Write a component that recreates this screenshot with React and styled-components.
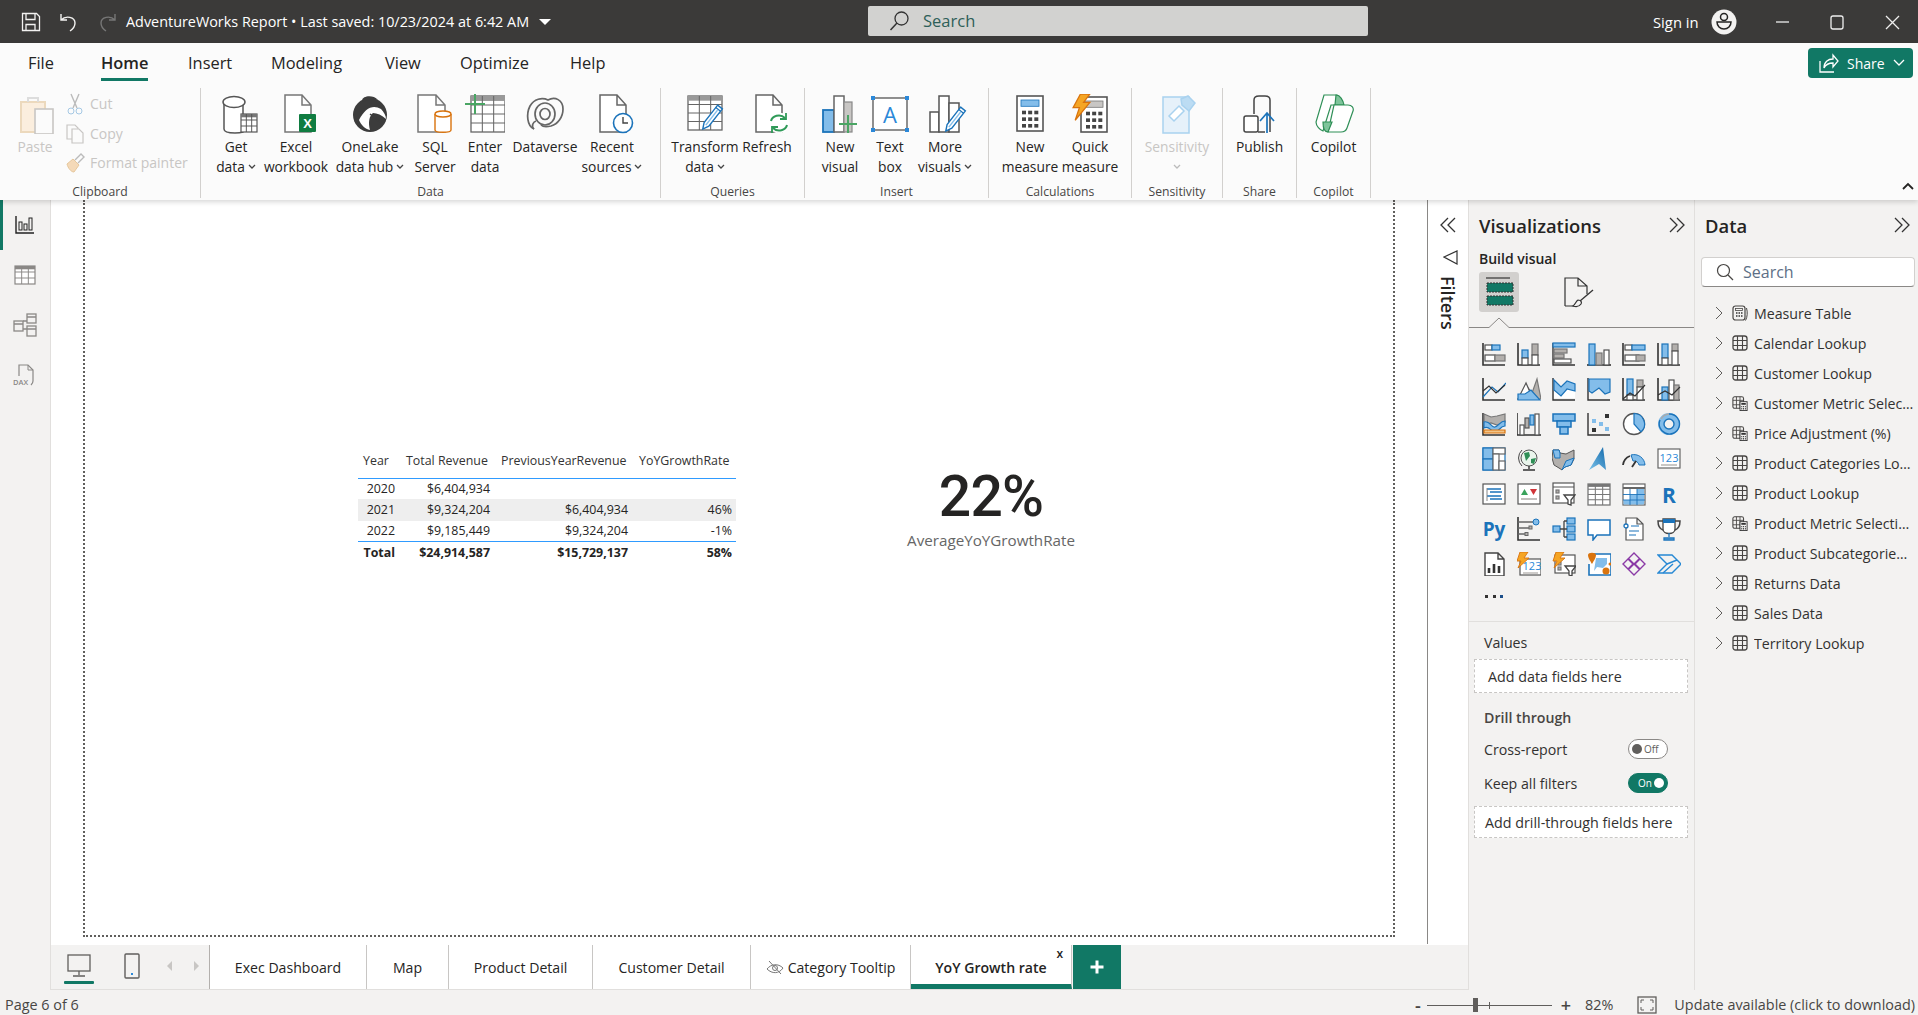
import React from 'react';
import styled, { createGlobalStyle } from 'styled-components';

const FONT = '"Open Sans", "Noto Sans", "Liberation Sans", sans-serif';
const D = '#505050', K = '#333', B = '#1b73ba', L = '#83bdea', G = '#b3b0ad', W = '#fff', GR = '#2f8f57', OR = '#d9730d', T = '#117865';

const Global = createGlobalStyle`
  html, body { margin: 0; padding: 0; width: 100%; height: 100%; overflow: hidden; background: #fff; }
  body { font-family: ${FONT}; color: #252423; }
  #root { width: 1918px; height: 1015px; }
`;

const Shell = styled.div`display:flex;flex-direction:column;width:1918px;height:1015px;overflow:hidden;`;
const TitleBar = styled.header`height:43px;background:#3b3a39;display:flex;align-items:center;position:relative;color:#fff;flex:none;`;
const QuickIcons = styled.div`display:flex;align-items:center;gap:18px;margin-left:21px;width:105px;flex:none;`;
const DocTitle = styled.div`font-size:14.4px;white-space:nowrap;display:flex;align-items:center;gap:8px;width:742px;flex:none;`;
const Caret = styled.span`width:0;height:0;border-left:6px solid transparent;border-right:6px solid transparent;border-top:6px solid #fff;margin-left:2px;`;
const SearchBox = styled.div`width:500px;height:30px;margin-top:-2px;background:#d2d2d0;border-radius:2px;display:flex;align-items:center;gap:14px;padding-left:21px;box-sizing:border-box;color:#2e5f58;font-size:16.5px;flex:none;`;
const Account = styled.div`margin-left:285px;display:flex;align-items:center;gap:12px;font-size:14.8px;width:90px;flex:none;white-space:nowrap;`;
const WinControls = styled.div`display:flex;align-items:center;margin-left:29px;gap:35px;`;

const Ribbon = styled.section`height:157px;background:#fbfbfb;flex:none;position:relative;z-index:5;box-shadow:0 2px 5px rgba(0,0,0,.16);`;
const TabRow = styled.nav`height:45px;display:flex;align-items:flex-start;position:relative;`;
const RibbonTab = styled.div`position:absolute;left:${p=>p.$x}px;top:8px;height:27px;line-height:24px;font-size:16.4px;white-space:nowrap;font-weight:${p=>p.$on?600:400};border-bottom:${p=>p.$on?`3px solid ${T}`:'3px solid transparent'};color:#252423;`;
const ShareButton = styled.button`margin-left:auto;margin-top:5px;margin-right:5px;width:105px;height:30px;background:${T};border:0;border-radius:4px;color:#fff;font:14px ${FONT};display:flex;align-items:center;padding:0 0 0 9px;gap:8px;`;
const RibbonBody = styled.div`display:flex;height:110px;`;
const Group = styled.div`width:${p=>p.$w}px;height:110px;box-sizing:border-box;border-right:1px solid #d2d0ce;display:flex;flex-direction:column;flex:none;`;
const GroupRow = styled.div`height:93px;flex:none;display:flex;padding-left:${p=>p.$pad||0}px;`;
const GroupLabel = styled.div`line-height:22px;height:22px;flex:none;text-align:center;font-size:12.2px;color:#484644;`;
const RButton = styled.div`width:${p=>p.$w?p.$w+'px':'100%'};flex:none;display:flex;flex-direction:column;align-items:center;padding-top:6px;box-sizing:border-box;color:${p=>p.$off?'#c8c6c4':'#252423'};`;
const RIcon = styled.div`height:40px;display:flex;justify-content:center;transform:translateX(${p=>p.$dx||0}px);`;
const RText = styled.div`font-size:13.8px;line-height:20px;height:20px;margin-top:3px;white-space:nowrap;text-align:center;& + & {margin-top:0;} display:flex;align-items:center;gap:3px;justify-content:center;`;
const SmallCol = styled.div`display:flex;flex-direction:column;margin-top:1px;`;
const SmallBtn = styled.div`height:29.5px;display:flex;align-items:center;gap:5px;font-size:14px;color:#c8c6c4;white-space:nowrap;`;
const Collapse = styled.div`position:absolute;right:4px;bottom:5px;`;

const Main = styled.div`flex:1;display:flex;min-height:0;`;
const Rail = styled.aside`width:50px;background:#f3f2f1;border-right:1px solid #e1dfdd;flex:none;display:flex;flex-direction:column;align-items:center;position:relative;`;
const RailBtn = styled.div`height:50px;width:100%;display:flex;align-items:center;justify-content:center;box-sizing:border-box;border-left:${p=>p.$on?`3px solid ${T}`:'3px solid transparent'};padding-right:3px;`;
const Center = styled.div`width:1417px;flex:none;display:flex;flex-direction:column;min-height:0;`;
const WorkArea = styled.div`flex:1;display:flex;min-height:0;`;
const Canvas = styled.main`width:1376px;box-sizing:border-box;padding:0 32px 8px 32px;background:#fff;flex:none;`;
const Page = styled.div`height:100%;box-sizing:border-box;border:2px dotted #605e5c;border-top:0;position:relative;`;
const FiltersPane = styled.aside`flex:1;border-left:1px solid #8a8886;background:#fff;display:flex;flex-direction:column;align-items:center;padding-top:15px;margin-bottom:1px;`;
const FunnelWrap = styled.div`margin-top:14px;margin-left:8px;height:20px;`;
const FiltersText = styled.div`writing-mode:vertical-rl;font-size:18px;font-weight:600;margin-top:7px;color:#252423;`;
const TabsBar = styled.nav`height:44px;flex:none;display:flex;background:#f3f2f1;border-bottom:1px solid #e1dfdd;`;
const ViewSwitch = styled.div`width:159px;flex:none;display:flex;align-items:flex-start;position:relative;border-right:1px solid #b3b0ad;box-sizing:border-box;`;
const ViewBtn = styled.div`width:${p=>p.$w}px;height:44px;display:flex;flex-direction:column;align-items:center;padding-top:8px;box-sizing:border-box;flex:none;position:relative;`;
const ActiveMark = styled.div`position:absolute;left:13px;bottom:5px;width:30px;height:3px;background:${T};border-radius:1px;`;
const PageTab = styled.div`width:${p=>p.$w}px;flex:none;box-sizing:border-box;background:#fff;border-right:1px solid #c8c6c4;display:flex;align-items:center;justify-content:center;gap:4px;font-size:14.1px;font-weight:${p=>p.$on?600:400};white-space:nowrap;position:relative;border-bottom:${p=>p.$on?`5px solid ${T}`:'0'};padding-top:${p=>p.$on?'5px':'0'};color:#252423;`;
const TabClose = styled.span`position:absolute;right:8px;top:2px;font-size:12px;font-weight:600;line-height:14px;`;
const AddTab = styled.div`width:48px;background:${T};flex:none;display:flex;align-items:center;justify-content:center;margin-left:1px;`;

const VizPane = styled.aside`width:225px;flex:none;background:#f3f2f1;border-left:1px solid #e1dfdd;`;
const DataPane = styled.aside`flex:1;background:#f3f2f1;border-left:1px solid #e1dfdd;min-width:0;`;
const PaneHead = styled.div`height:50px;display:flex;align-items:center;justify-content:space-between;padding:0 ${p=>p.$right}px 0 ${p=>p.$left}px;`;
const PaneTitle = styled.h2`margin:0;font-size:18.4px;font-weight:600;color:#252423;`;
const BuildLabel = styled.div`font-size:14px;font-weight:600;line-height:17px;padding-left:10px;`;
const ToggleRow = styled.div`display:flex;align-items:center;margin:5px 0 0 10px;height:40px;gap:43px;`;
const Selected = styled.div`width:40px;height:40px;background:#d2d0ce;border-radius:3px;display:flex;align-items:center;justify-content:center;`;
const NotchLine = styled.div`height:15px;position:relative;border-bottom:1px solid #8a8886;`;
const Notch = styled.span`position:absolute;left:20px;bottom:-1px;width:20px;height:10px;background:#f3f2f1;display:block;`;
const NotchStroke = styled.svg`position:absolute;left:0;top:1px;`;
const VizGrid = styled.div`display:grid;grid-template-columns:repeat(6,35px);grid-auto-rows:35px;margin:8px 0 0 7px;`;
const VizCell = styled.div`display:flex;align-items:center;justify-content:center;`;
const Divider = styled.div`height:1px;background:#e1dfdd;margin-top:5px;`;
const FieldLabel = styled.div`font-size:14.2px;height:37px;line-height:42px;padding-left:15px;color:#323130;`;
const Well = styled.div`margin:${p=>p.$mt||0}px 6px 0 5px;height:${p=>p.$h}px;background:#fff;border:1px dashed #c8c6c4;box-sizing:border-box;display:flex;align-items:center;padding-left:${p=>p.$pad}px;font-size:14.3px;color:#323130;white-space:nowrap;`;
const DrillTitle = styled.div`font-size:14.2px;font-weight:600;line-height:20px;margin-top:15px;padding-left:15px;color:#484644;`;
const SwitchRow = styled.div`display:flex;align-items:center;justify-content:space-between;height:20px;margin-top:${p=>p.$mt}px;padding:0 26px 0 15px;font-size:14.2px;color:#323130;`;
const Toggle = styled.div`width:40px;height:20px;box-sizing:border-box;border-radius:10px;border:1px solid ${p=>p.$on?T:'#8a8886'};background:${p=>p.$on?T:'#fff'};display:flex;align-items:center;justify-content:${p=>p.$on?'flex-end':'flex-start'};padding:0 3px;gap:2px;font-size:10px;color:${p=>p.$on?'#fff':'#605e5c'};`;
const Knob = styled.span`width:10px;height:10px;border-radius:50%;background:${p=>p.$on?'#fff':'#605e5c'};flex:none;`;
const Search2 = styled.div`margin:7px 3px 0 6px;height:30px;background:#fff;border:1px solid #d2d0ce;border-bottom-color:#8a8886;border-radius:4px;box-sizing:border-box;display:flex;align-items:center;padding-left:14px;gap:9px;font-size:16px;color:#5d6f86;`;
const FieldList = styled.ul`list-style:none;margin:11px 0 0;padding:0;`;
const FieldRow = styled.li`height:30px;display:flex;align-items:center;padding-left:20px;gap:9px;font-size:14.2px;color:#323130;`;
const FieldIcon = styled.span`width:16px;flex:none;display:flex;overflow:visible;margin-right:-3px;`;
const FieldName = styled.span`white-space:nowrap;overflow:hidden;text-overflow:ellipsis;width:160px;`;

const TableVisual = styled.table`position:absolute;left:273px;top:248px;width:378px;table-layout:fixed;border-collapse:collapse;font-size:12.4px;color:#252423;`;
const Th = styled.th`font-weight:400;text-align:left;height:24px;padding:0 0 6px ${p=>p.$pad}px;border-bottom:1px solid #2f9bff;white-space:nowrap;overflow:visible;color:#333;`;
const Td = styled.td`text-align:right;padding:0 4px 0 0;height:${p=>p.$h||20}px;box-sizing:border-box;white-space:nowrap;font-weight:${p=>p.$b?700:400};background:${p=>p.$alt?'#eeeeee':'transparent'};border-top:${p=>p.$top?'1px solid #2f9bff':'0'};`;
const CardVisual = styled.div`position:absolute;left:796px;top:265px;width:220px;text-align:center;`;
const CardValue = styled.div`font-family:Roboto, "Liberation Sans", sans-serif;font-weight:500;font-size:57px;line-height:64px;color:#252423;letter-spacing:-.8px;`;
const CardLabel = styled.div`font-size:15.2px;line-height:20px;color:#666;margin-top:1px;`;

const StatusBar = styled.footer`height:25px;box-sizing:border-box;flex:none;background:#f3f2f1;display:flex;align-items:center;font-size:14.2px;color:#484644;padding:5px 0 0 5px;position:relative;`;
const Zoomer = styled.div`margin-left:auto;display:flex;align-items:center;`;
const Slider = styled.div`width:125px;height:1px;background:#605e5c;margin:0 9px 0 6px;position:relative;`;
const Thumb = styled.span`position:absolute;left:46px;top:-7px;width:5px;height:14px;background:#605e5c;`;
const Tick = styled.span`position:absolute;left:62px;top:-3px;width:1px;height:7px;background:#605e5c;`;
const StatusText = styled.span`white-space:nowrap;margin-left:${p=>p.$ml||0}px;margin-right:${p=>p.$mr||0}px;font-size:${p=>p.$fs||14.4}px;font-weight:${p=>p.$b?600:400};line-height:18px;`;

/* drawing helpers */
const Svg = ({ s = 24, w, h, vb, children, sw }) => (
  <svg width={w || s} height={h || s} viewBox={vb || `0 0 ${w || s} ${h || s}`} fill="none" strokeWidth={sw}>{children}</svg>
);
const R = ({ x, y, w, h, f = W, s = D, sw = 1.2, r }) => <rect x={x} y={y} width={w} height={h} fill={f} stroke={s} strokeWidth={sw} rx={r} />;
const P = ({ d, f = 'none', s = D, sw = 1.2, ...o }) => <path d={d} fill={f} stroke={s} strokeWidth={sw} {...o} />;
const Axis = () => <P d="M1 1V23H23" s={K} sw={1.6} />;
const ChevD = ({ c = '#444' }) => <svg width="8" height="6" viewBox="0 0 8 6"><path d="M1 1l3 3 3-3" fill="none" stroke={c} strokeWidth="1.3" /></svg>;
const Dbl = ({ left }) => (
  <Svg s={20}>{left
    ? <P d="M10 3L3 10l7 7M17 3l-7 7 7 7" s="#333" sw={1.3} />
    : <P d="M3 3l7 7-7 7M10 3l7 7-7 7" s="#333" sw={1.3} />}</Svg>
);
const DocShape = ({ x = 8, y = 1, w = 24, h = 37, c = '#666', sw = 1.5 }) => (
  <P d={`M${x} ${y}h${w - 9}l9 10v${h - 10}h-${w}zM${x + w - 9} ${y}v10h9`} f={W} s={c} sw={sw} />
);
const GridTable = ({ x, y, w, h, c = '#666', cols = 3, rows = 3, head, sw = 1.3 }) => {
  const v = [], hz = [];
  for (let i = 1; i < cols; i++) v.push(x + (w * i) / cols);
  for (let i = 1; i < rows; i++) hz.push(y + (h * i) / rows);
  return (
    <g>
      <rect x={x} y={y} width={w} height={h} fill={W} stroke={c} strokeWidth={sw} />
      {head && <rect x={x} y={y} width={w} height={h / rows * 0.55} fill={head} />}
      {v.map(a => <line key={a} x1={a} x2={a} y1={y} y2={y + h} stroke={c} strokeWidth={sw * .8} />)}
      {hz.map(a => <line key={a} x1={x} x2={x + w} y1={a} y2={a} stroke={c} strokeWidth={sw * .8} />)}
    </g>
  );
};
const Pencil = ({ x, y, rot = 40, len = 24 }) => (
  <g transform={`translate(${x} ${y}) rotate(${rot})`}>
    <path d={`M-3 0h6v${len - 6}l-3 6-3-6z`} fill={W} stroke={B} strokeWidth="1.4" />
    <path d="M-3 3h6" stroke={B} strokeWidth="1.2" />
    <path d={`M0 4v${len - 9}`} stroke={L} strokeWidth="1.5" />
  </g>
);
const Calc = ({ x, y, w = 28, h = 36, top = L }) => {
  const dots = [];
  for (let r = 0; r < 3; r++) for (let c = 0; c < 3; c++) dots.push([x + 5 + c * (w - 10) / 2.6, y + h * .42 + r * h * .19]);
  return (
    <g>
      <rect x={x} y={y} width={w} height={h} fill={W} stroke="#555" strokeWidth="1.6" />
      <rect x={x + 4} y={y + 4} width={w - 8} height={h * .18} fill={top} stroke={top === L ? B : '#777'} strokeWidth=".8" />
      {dots.map(([a, b]) => <rect key={a + '-' + b} x={a} y={b} width="4" height="3.6" fill="#444" />)}
    </g>
  );
};
const Bolt = ({ tf }) => <path transform={tf} d="M9 0h9L12 8h6L4 25l4-12H2z" fill="#f5a524" stroke={OR} strokeWidth="1.2" />;

const RI = {
  getdata: <Svg s={40}><P d="M5 8v27c0 3 6 4 11 4 3 0 5 0 8-1V8" f={W} s="#555" sw={1.5} /><ellipse cx="15" cy="8" rx="11" ry="5.5" fill={W} stroke="#555" strokeWidth="1.5" /><GridTable x={22} y={20} w={16} h={18} c="#555" cols={3} rows={3} head="#777" sw={1.2} /></Svg>,
  excel: <Svg s={40}><DocShape x={5} y={1} w={26} h={37} c="#777" /><rect x="19" y="20" width="17" height="18" rx="1" fill="#107c41" /><text x="27.5" y="34" fontSize="13" fontWeight="700" fill="#fff" textAnchor="middle" fontFamily="Liberation Sans">X</text></Svg>,
  onelake: <Svg s={40}><circle cx="20" cy="21" r="17" fill="#3c3c3c" /><path d="M9 26c6-12 14-16 22-11 3 3 5 7 5 10-4-4-9-6-13-6-4 3-5 10-3 17-5-1-9-5-11-10z" fill="#fff" /><path d="M13 8C9 3 22-1 28 6c-5-1-10 0-15 2z" fill="#3c3c3c" /><path d="M20 20c3 2 8 7 12 9" stroke="#3c3c3c" strokeWidth="1.5" /></Svg>,
  sql: <Svg s={40}><DocShape x={3} y={1} w={27} h={37} c="#777" /><path d="M20 20v16c0 3 16 3 16 0V20" fill={W} stroke={OR} strokeWidth="1.4" /><ellipse cx="28" cy="20" rx="8" ry="3" fill={W} stroke={OR} strokeWidth="1.4" /></Svg>,
  enter: <Svg s={40}><GridTable x={6} y={2} w={34} h={36} c="#666" cols={3} rows={4} head="#999" /><P d="M10 0v20M0 10h20" s="#4aa564" sw={2} /></Svg>,
  dataverse: <Svg s={40}><g fill="none" stroke="#666" strokeWidth="1.7"><path d="M9 35C2 32 1 20 5 12 9 5 17 3 23 6c7-4 15 0 15 9 0 8-5 15-12 17-4 1-8 1-10-1" /><ellipse cx="20" cy="20" rx="10" ry="11" /><ellipse cx="20" cy="20" rx="5" ry="5.5" /><path d="M9 35c-3-3-1-7 2-8" /></g></Svg>,
  recent: <Svg s={40}><DocShape x={3} y={1} w={26} h={37} c="#666" /><circle cx="26" cy="29" r="9.5" fill={W} stroke={B} strokeWidth="1.6" /><path d="M26 23v6h5" stroke="#444" strokeWidth="1.4" /></Svg>,
  transform: <Svg s={40}><GridTable x={2} y={2} w={34} h={34} c="#666" cols={3} rows={4} head="#999" /><Pencil x={34} y={13} rot={38} len={28} /></Svg>,
  refresh: <Svg s={40}><DocShape x={4} y={1} w={26} h={37} c="#666" /><circle cx="27" cy="29" r="10" fill={W} stroke={W} /><path d="M19 27c1-5 9-8 14-3M35 31c-1 5-9 8-14 3" stroke="#2f9a58" strokeWidth="2" /><path d="M34 19v6h-6M20 39v-6h6" stroke="#2f9a58" strokeWidth="1.8" /></Svg>,
  newvis: <Svg s={40}><R x={3} y={16} w={11} h={22} f={L} s={B} sw={1.8} /><R x={14} y={2} w={10} h={36} s="#666" sw={1.5} /><R x={24} y={8} w={8} h={30} f="#c8c6c4" s="#888" /><P d="M28 21v18M19 30h18" s="#4aa564" sw={2} /></Svg>,
  textbox: <Svg s={40}><rect x="3" y="4" width="34" height="32" fill={W} stroke="#555" strokeWidth="1.3" />{[[3, 4], [37, 4], [3, 36], [37, 36]].map(([a, b]) => <rect key={a + '' + b} x={a - 2} y={b - 2} width="4" height="4" fill="#2b88d8" />)}<text x="20" y="29" fontSize="22" fill="#2b88d8" textAnchor="middle" fontFamily="Open Sans">A</text></Svg>,
  more: <Svg s={40}><R x={2} y={18} w={9} h={20} s="#555" sw={1.5} /><R x={11} y={2} w={10} h={36} s="#555" sw={1.5} /><R x={21} y={9} w={10} h={29} s="#555" sw={1.5} /><Pencil x={35} y={15} rot={38} len={28} /></Svg>,
  newm: <Svg s={40}><Calc x={7} y={2} w={26} h={35} /></Svg>,
  quick: <Svg s={40}><Calc x={11} y={3} w={26} h={35} top="#c8c6c4" /><Bolt tf="translate(1 0) scale(1.05)" /></Svg>,
  sens: <Svg s={40}><g stroke="#a9d2ef" strokeWidth="1.5"><path d="M6 3h26v36H6z" fill="#e6f1fa" /><path d="M12 22l10-10 5 5-10 10z" fill="#fff" /><path d="M24 5l7-3 7 7-6 8-7-6z" fill="#bcdcf3" /></g></Svg>,
  publish: <Svg s={40}><P d="M14 20V6c0-3 2-4 5-4h6c3 0 5 1 5 4v32" s="#444" sw={1.5} /><rect x="4" y="22" width="14" height="16" rx="2" fill={W} stroke="#444" strokeWidth="1.5" /><path d="M18 38h7" stroke="#444" strokeWidth="1.5" /><P d="M27 39V20M20 27l7-8 7 8" s={B} sw={1.7} /></Svg>,
  copilot: <Svg s={40}><g stroke={GR} strokeWidth="1.2"><path d="M10 1h13c3 1 5 5 6 10H17l-8 26c-3-1-7-5-7-9z" fill={W} /><path d="M22 1c4 0 7 5 8 10h-9z" fill="#7fc49b" /><path d="M20 11h14c4 0 6 3 5 6l-6 17c-1 3-3 4-6 4H14l6-27z" fill={W} /><path d="M9 28h9l-4 10c-3 0-5-4-5-10z" fill="#7fc49b" /></g></Svg>,
};

const VIZ = [
  <g><Axis /><R x={3} y={3} w={7} h={5} /><R x={10} y={3} w={8} h={5} f={L} s={B} /><R x={3} y={13} w={10} h={6} /><R x={13} y={13} w={10} h={6} f={G} s="#777" /></g>,
  <g><Axis /><R x={5} y={8} w={6} h={8} f={L} s={B} /><R x={5} y={16} w={6} h={7} /><R x={15} y={2} w={6} h={11} f={G} s="#777" /><R x={15} y={13} w={6} h={10} /></g>,
  <g><P d="M1 1V23H23" s={K} sw={1.4} /><R x={1} y={1} w={22} h={4} f={L} s={B} /><R x={2} y={7} w={13} h={4} f={G} s="#777" /><R x={2} y={12} w={10} h={4} f={G} s="#777" /><R x={2} y={17} w={17} h={4} /></g>,
  <g><P d="M0 23H24" s={K} sw={1.6} /><R x={2} y={2} w={6} h={21} f={L} s={B} /><R x={9} y={11} w={6} h={12} f={G} s="#777" /><R x={17} y={8} w={5} h={15} /></g>,
  <g><Axis /><R x={3} y={3} w={7} h={5} /><R x={10} y={3} w={13} h={5} f={L} s={B} /><R x={3} y={13} w={14} h={6} f={W} /><R x={14} y={13} w={9} h={6} f={G} s="#777" /></g>,
  <g><Axis /><R x={5} y={2} w={6} h={14} f={L} s={B} /><R x={5} y={16} w={6} h={7} /><R x={15} y={2} w={6} h={7} f={G} s="#777" /><R x={15} y={9} w={6} h={14} /></g>,

  <g><Axis /><P d="M1 20L10 10l6 5 8-9" s={B} /><P d="M1 14l6-5 7 7 9-8" s={K} /></g>,
  <g><P d="M1 22L9 8l6 8 5-14 4 20z" f={G} s="#777" /><P d="M1 22L9 6l7 16z" f={W} s="#555" /><P d="M1 23v-6l7 0 6-4 9 10z" f={L} s={B} /></g>,
  <g><P d="M1 1V23H23" s={K} sw={1.4} /><P d="M2 3l7 7 6-6 8 3v14H2z" f={W} s="none" /><P d="M2 3l7 7 6-6 8 3v7l-8-2-6 7-7-6z" f={L} s={B} /></g>,
  <g><P d="M1 1V23H23" s={K} sw={1.4} /><P d="M2 2h21v13l-5 2-6-6-7 5-3-2z" f={L} s={B} /></g>,
  <g><Axis /><R x={5} y={2} w={6} h={16} f={L} s={B} /><R x={5} y={18} w={6} h={5} /><R x={15} y={3} w={6} h={7} f={G} s="#777" /><R x={15} y={10} w={6} h={13} /><P d="M1 22l7-6 5 3 10-11" s={K} /></g>,
  <g><Axis /><R x={5} y={10} w={6} h={13} f={L} s={B} /><R x={12} y={3} w={5} h={20} /><R x={17} y={8} w={5} h={15} f={G} s="#777" /><P d="M1 18l7-4 7 4 8-8" s={K} /></g>,

  <g><Axis /><P d="M2 2l7 3 6-1 8-2v8l-8 3-6-2-7 2z" f={G} s="#777" /><P d="M2 10c6-2 7 6 11 5s5-6 10-6v5c-5 0-6 6-10 6s-6-7-11-4z" f={L} s={B} /><P d="M2 18h21v3H2z" f="#f1c58a" s={OR} /></g>,
  <g><P d="M0 1v22h24" s={K} sw={1.6} /><R x={3} y={13} w={4} h={10} s="#555" /><R x={8} y={6} w={4} h={10} f={G} s="#555" /><R x={13} y={3} w={4} h={10} f={L} s={B} /><R x={18} y={2} w={4} h={21} s="#555" /></g>,
  <g><R x={1} y={2} w={22} h={7} f={L} s={B} sw={1.5} /><R x={5} y={9} w={14} h={6} f={L} s={B} sw={1.5} /><R x={8} y={15} w={8} h={7} f={L} s={B} sw={1.5} /></g>,
  <g><P d="M1 1V23H23" s={K} sw={1.4} /><rect x="5" y="7" width="4" height="4" fill={L} /><rect x="12" y="10" width="4" height="4" fill={L} /><rect x="18" y="2" width="4" height="4" fill="#333" /><rect x="5" y="16" width="4" height="4" fill="#333" /><rect x="18" y="15" width="4" height="4" fill={L} /></g>,
  <g><circle cx="12" cy="12" r="10.5" fill={W} stroke="#555" strokeWidth="1.4" /><P d="M12 1.5a10.5 10.5 0 0 1 7 18.3L12 12z" f={L} s={B} /></g>,
  <g><circle cx="12" cy="12" r="8" stroke={L} strokeWidth="6" /><path d="M3 8A10 10 0 0 0 8 21a10 10 0 0 0 14-6 10 10 0 0 0-10-13" stroke={B} strokeWidth="1.4" /><path d="M4 7a10 10 0 0 1 8-5" stroke="#aaa" strokeWidth="1.4" /><circle cx="12" cy="12" r="5" fill="#f3f2f1" stroke={B} strokeWidth="1.4" /></g>,

  <g><R x={1} y={1} w={22} h={22} s={B} /><R x={1} y={1} w={10} h={11} f={L} s={B} /><R x={1} y={12} w={10} h={11} f={L} s={B} /><R x={11} y={1} w={12} h={6} s="#666" /><R x={11} y={7} w={6} h={16} s="#666" /><R x={17} y={14} w={6} h={9} s="#666" /></g>,
  <g><circle cx="12" cy="11" r="8" fill="#eaf5ec" stroke="#555" strokeWidth="1" /><path d="M7 6l5-1 1 4-4 5zM14 12l5-1-2 6-3-1z" fill={GR} /><path d="M5 3a11 11 0 0 0 0 16" stroke="#444" /><path d="M12 19v3M6 23h12" stroke="#333" strokeWidth="1.4" /></g>,
  <g><path d="M1 3l6 0 1 3 6 1 8-4 0 9-3 6-6 2-3 3-3-2-5-3-2-7z" fill={G} stroke="#555" /><path d="M1 3h6l1 3v5H3z" fill={L} stroke={B} /><path d="M14 14l8-3-3 7-6 2-3 3z" fill={L} stroke={B} /></g>,
  <g><path d="M16 0l3 23-7-6-10 6z" fill="url(#nav)" /><defs><linearGradient id="nav" x1="0" y1="1" x2="1" y2="0"><stop offset="0" stopColor="#7cc3ea" /><stop offset="1" stopColor="#1269ab" /></linearGradient></defs></g>,
  <g><path d="M1 18a11 11 0 0 1 7-9" stroke="#333" strokeWidth="1.8" /><path d="M9 8a11 11 0 0 1 14 10h-6a5 5 0 0 0-6-4z" fill={L} stroke={B} /><path d="M10 20l4-6" stroke="#333" strokeWidth="1.8" /></g>,
  <g><R x={1} y={2} w={22} h={19} s="#666" /><text x="12" y="15" fontSize="11" textAnchor="middle" fill="#2b88d8" fontFamily="Open Sans">123</text><path d="M4 18h16" stroke={G} strokeWidth="1.4" /></g>,

  <g><R x={1} y={2} w={22} h={20} s="#555" /><path d="M5 7h14M8 10h12M5 14h14M8 17h12" stroke={B} strokeWidth="1.4" /><path d="M5 6v13" stroke="#888" /></g>,
  <g><R x={1} y={2} w={22} h={20} s="#555" /><path d="M4 13l3.5-6 3.5 6z" fill="#3aa35c" /><path d="M13 7h7l-3.5 6z" fill="#d13438" /><path d="M4 17h16" stroke={G} strokeWidth="1.6" /></g>,
  <g><R x={1} y={1} w={21} h={20} s="#555" /><path d="M1 5h21" stroke="#555" /><R x={4} y={8} w={3} h={3} f={G} s="#777" /><R x={4} y={14} w={3} h={3} f={G} s="#777" /><P d="M12 13h11l-4 5v5l-3-1v-4z" f={W} s="#444" sw={1.3} /></g>,
  <g><GridTable x={1} y={2} w={22} h={21} c="#777" cols={3} rows={4} head="#777" /></g>,
  <g><R x={1} y={2} w={22} h={21} s="#666" /><path d="M1 6h22" stroke="#666" strokeWidth="2" /><rect x="8" y="13" width="7" height="5" fill={L} /><rect x="15" y="7" width="7" height="15" fill={L} /><rect x="1.5" y="18" width="20" height="4.5" fill={L} /><path d="M8 7v16M15 7v16M1 12.5h22M1 18h22" stroke={B} strokeWidth=".9" /></g>,
  <text x="12" y="21" fontSize="21" fontWeight="700" textAnchor="middle" fill={B} fontFamily="Open Sans">R</text>,

  <text x="12" y="19" fontSize="19" fontWeight="700" textAnchor="middle" fill={B} fontFamily="Open Sans">Py</text>,
  <g><path d="M1 0v23h22" stroke={K} strokeWidth="1.6" /><path d="M1 5h15M1 11h11M1 17h7" stroke="#666" strokeWidth="1.4" /><circle cx="19" cy="5" r="3" fill={L} stroke={B} /><rect x="12" y="9" width="3" height="3" fill={G} stroke="#666" /><rect x="8" y="15.5" width="3" height="3" fill={G} stroke="#666" /></g>,
  <g><R x={1} y={9} w={7} h={6} f={L} s={B} /><R x={15} y={1} w={8} h={6} f={L} s={B} /><R x={15} y={9} w={8} h={6} f={L} s={B} /><R x={15} y={17} w={8} h={6} f={L} s={B} /><path d="M8 12h7M12 4v16M12 4h3M12 20h3" stroke="#444" strokeWidth="1.3" /></g>,
  <g><path d="M1 3h22v15H10l-4 5v-5H1z" fill={W} stroke={B} strokeWidth="1.5" /></g>,
  <g><path d="M4 1h11l6 6v16H4zM15 1v6h6" fill={W} stroke="#555" strokeWidth="1.2" /><circle cx="4" cy="9" r="2" fill={W} stroke={B} strokeWidth="1.3" /><path d="M9 9h8M7 14h10M7 18h7" stroke={B} strokeWidth="1.2" /></g>,
  <g><path d="M6 2h12v10c0 6-12 6-12 0z" fill={W} stroke="#444" strokeWidth="1.3" /><rect x="6" y="2" width="12" height="4" fill={B} /><path d="M6 4H1c0 6 2 8 5 9M18 4h5c0 6-2 8-5 9" stroke="#444" strokeWidth="1.5" /><path d="M12 16v4M7 21h10v2H7z" fill={L} stroke={B} strokeWidth="1.3" /></g>,

  <g><path d="M3 1h13l6 6v17H3zM16 1v6h6" fill={W} stroke="#444" strokeWidth="1.4" /><path d="M7 21v-5M12 21v-9M17 21v-7" stroke="#333" strokeWidth="2.6" /></g>,
  <g><R x={3} y={7} w={21} h={16} f={W} s="#555" /><text x="15" y="18" fontSize="11" textAnchor="middle" fill="#2b88d8" fontFamily="Open Sans">123</text><path d="M6 21h15" stroke={G} strokeWidth="1.3" /><path d="M3 0h8L7 6h5L1 16l3-7H0z" fill="#f5a524" stroke={OR} strokeWidth=".9" /></g>,
  <g><R x={3} y={3} w={20} h={18} s="#555" /><R x={6} y={10} w={3} h={3} f={G} s="#777" /><R x={6} y={15} w={3} h={3} f={G} s="#777" /><P d="M13 14h11l-4 5v5l-3-1v-4z" f={W} s="#444" sw={1.3} /><path d="M4 0h8L8 6h5L2 16l3-7H1z" fill="#f5a524" stroke={OR} strokeWidth=".9" /></g>,
  <g><path d="M6 2h18v21H2V12" stroke={B} strokeWidth="1.6" fill={W} /><path d="M9 6h11v6l-4 4-6-1-3 4z" fill={L} /><path d="M1 3c0-3 8-3 8 0 0 3-3 7-4 9-1-2-4-6-4-9z" fill={OR} /><circle cx="19" cy="19" r="3.5" fill={OR} /><circle cx="23" cy="12" r="1.5" fill={OR} /></g>,
  <g fill="none" stroke="#8a3aa6" strokeWidth="1.4"><path d="M12 1l5.5 5.5L12 12 6.5 6.5zM12 12l5.5 5.5L12 23l-5.5-5.5zM6 7l5 5-5 5-5-5zM18 7l5 5-5 5-5-5z" /></g>,
  <g fill="none" stroke="#2688d4" strokeWidth="1.4"><path d="M1 3h14l9 9-9 9H1l9-9z" /><path d="M10 12l10-4M6 21l10-9" /></g>,
];

const TableIcon = () => <Svg s={16}><rect x="1" y="1" width="14" height="14" rx="2.5" stroke="#484644" strokeWidth="1.3" /><path d="M5.5 1v14M10.5 1v14M1 5.5h14M1 10.5h14" stroke="#484644" strokeWidth="1.1" /></Svg>;
const CalcTableIcon = () => <Svg s={18}><rect x="1" y="2" width="12" height="13" rx="2" stroke="#484644" strokeWidth="1.2" /><path d="M5 2v13M9 2v13M1 6h12M1 11h12" stroke="#484644" /><rect x="9" y="7.5" width="8" height="10" fill="#f3f2f1" stroke="#333" strokeWidth="1" /><rect x="10.5" y="9" width="5" height="2" fill="#333" /><path d="M10.5 13h5M10.5 15.5h5" stroke="#333" strokeDasharray="1 1" strokeWidth="1.5" /></Svg>;
const MeasureIcon = () => <Svg s={16}><rect x="1" y="1" width="12" height="14" rx="2.5" fill="#f3f2f1" stroke="#484644" strokeWidth="1.2" /><rect x="3.5" y="3.5" width="7" height="2" stroke="#484644" strokeWidth=".8" /><path d="M4 8h1.5M6.5 8H8M9 8h1.5M4 11h1.5M6.5 11H8M9 11h1.5" stroke="#333" strokeWidth="1.5" /><path d="M14.5 3c1.2 4 1 9-1 12.5" stroke="#484644" /></Svg>;

const fields = [
  ['m', 'Measure Table'], ['t', 'Calendar Lookup'], ['t', 'Customer Lookup'], ['c', 'Customer Metric Selection'],
  ['c', 'Price Adjustment (%)'], ['t', 'Product Categories Lookup'], ['t', 'Product Lookup'], ['c', 'Product Metric Selection'],
  ['t', 'Product Subcategories Lookup'], ['t', 'Returns Data'], ['t', 'Sales Data'], ['t', 'Territory Lookup'],
];

const RB = ({ w, icon, dx, l1, l2, off, chev, chev2 }) => (
  <RButton $w={w} $off={off}>
    <RIcon $dx={dx}>{icon}</RIcon>
    <RText>{l1}</RText>
    {(l2 || chev2) && <RText>{l2}{(chev || chev2) && <ChevD c={off ? '#bbb' : '#444'} />}</RText>}
  </RButton>
);

const tabs = [['File', 28], ['Home', 101, true], ['Insert', 188], ['Modeling', 271], ['View', 385], ['Optimize', 460], ['Help', 570]];

export default function App() {
  return (
    <Shell>
      <Global />
      <TitleBar>
        <QuickIcons>
          <Svg s={20}><path d="M1.5 1.5h14l3 3v14h-17zM5 1.5v6h9v-6M5 18.5v-6h9v6" stroke="#f3f2f1" strokeWidth="1.3" /></Svg>
          <Svg s={20}><path d="M2 2v6h6M2 8c5-5 14-3 14 3 0 3-2 6-5 8" stroke="#f3f2f1" strokeWidth="1.4" /></Svg>
          <Svg s={20}><path d="M18 2v6h-6M18 8C13 3 4 5 4 11c0 3 2 6 5 8" stroke="#777" strokeWidth="1.4" /></Svg>
        </QuickIcons>
        <DocTitle>AdventureWorks Report&nbsp;• Last saved: 10/23/2024 at 6:42 AM<Caret /></DocTitle>
        <SearchBox>
          <Svg s={20}><circle cx="12.5" cy="7.5" r="6.5" stroke="#333" strokeWidth="1.3" /><path d="M8 12L1.5 19" stroke="#333" strokeWidth="1.5" /></Svg>
          Search
        </SearchBox>
        <Account>Sign in
          <Svg s={26}><circle cx="13" cy="13" r="12.5" fill="#f3f2f1" /><circle cx="13" cy="8" r="3.5" stroke="#252423" strokeWidth="1.5" /><path d="M6 13h14c0 4-3 7-7 7s-7-3-7-7z" stroke="#252423" strokeWidth="1.5" /></Svg>
        </Account>
        <WinControls>
          <Svg s={20}><path d="M4 10h13" stroke="#eee" strokeWidth="1.3" /></Svg>
          <Svg s={20}><rect x="4" y="4" width="12" height="13" rx="2" stroke="#eee" strokeWidth="1.3" /></Svg>
          <Svg s={20}><path d="M4 4l13 13M17 4L4 17" stroke="#eee" strokeWidth="1.3" /></Svg>
        </WinControls>
      </TitleBar>

      <Ribbon>
        <TabRow>
          {tabs.map(([t, x, on]) => <RibbonTab key={t} $x={x} $on={on}>{t}</RibbonTab>)}
          <ShareButton>
            <Svg s={22}><path d="M3 9v11h14M7 16c0-6 4-9 9-9V3l5 6-5 6v-4c-4 0-7 1-9 5z" stroke="#fff" strokeWidth="1.3" /></Svg>
            Share
            <Svg w={12} h={8}><path d="M1 1l5 5 5-5" stroke="#fff" strokeWidth="1.3" /></Svg>
          </ShareButton>
        </TabRow>
        <RibbonBody>
          <Group $w={201}>
            <GroupRow $pad={5}>
              <RB w={60} off icon={<Svg s={40}><path d="M4 8h24v30H4z" fill="#fbeede" stroke="#ecd9bd" strokeWidth="2" /><path d="M11 8V4h10v4" stroke="#ddd" strokeWidth="2" /><rect x="18" y="15" width="18" height="25" fill="#fbfbfb" stroke="#c8c6c4" strokeWidth="1.6" /></Svg>} dx={2} l1="Paste" />
              <SmallCol>
                <SmallBtn><Svg w={20} h={22}><path d="M6 1l6 14M14 1L8 15" stroke="#bbb" strokeWidth="1.4" /><circle cx="6" cy="18" r="3" stroke="#a5c8e4" /><circle cx="14" cy="18" r="3" stroke="#a5c8e4" /></Svg>Cut</SmallBtn>
                <SmallBtn><Svg w={20} h={22}><path d="M2 3h8l3 3v11H2z" fill="#fbfbfb" stroke="#c8c6c4" strokeWidth="1.2" /><path d="M7 7h7l4 4v10H7z" fill="#fbfbfb" stroke="#c8c6c4" strokeWidth="1.2" /></Svg>Copy</SmallBtn>
                <SmallBtn><Svg w={20} h={22}><path d="M2 12l6-5 6 6-5 7c-3 0-6-4-7-8z" fill="#f4d9b8" stroke="#e6c79c" /><path d="M10 8l6-6 3 3-6 6" stroke="#bbb" strokeWidth="1.4" /></Svg>Format painter</SmallBtn>
              </SmallCol>
            </GroupRow>
            <GroupLabel>Clipboard</GroupLabel>
          </Group>
          <Group $w={460}>
            <GroupRow $pad={5}>
              <RB w={60} dx={3} icon={RI.getdata} l1="Get" l2="data" chev />
              <RB w={60} dx={4} icon={RI.excel} l1="Excel" l2="workbook" />
              <RB w={88} icon={RI.onelake} l1="OneLake" l2="data hub" chev />
              <RB w={42} icon={RI.sql} l1="SQL" l2="Server" />
              <RB w={58} icon={RI.enter} l1="Enter" l2="data" />
              <RB w={62} icon={RI.dataverse} l1="Dataverse" />
              <RB w={72} dx={5} icon={RI.recent} l1="Recent" l2="sources" chev />
            </GroupRow>
            <GroupLabel>Data</GroupLabel>
          </Group>
          <Group $w={144}>
            <GroupRow $pad={4}>
              <RB w={80} dx={1} icon={RI.transform} l1="Transform" l2="data" chev />
              <RB w={44} dx={5} icon={RI.refresh} l1="Refresh" />
            </GroupRow>
            <GroupLabel>Queries</GroupLabel>
          </Group>
          <Group $w={184}>
            <GroupRow $pad={10}>
              <RB w={50} icon={RI.newvis} l1="New" l2="visual" />
              <RB w={50} icon={RI.textbox} l1="Text" l2="box" />
              <RB w={60} dx={3} icon={RI.more} l1="More" l2="visuals" chev />
            </GroupRow>
            <GroupLabel>Insert</GroupLabel>
          </Group>
          <Group $w={143}>
            <GroupRow $pad={10}>
              <RB w={62} icon={RI.newm} l1="New" l2="measure" />
              <RB w={58} icon={RI.quick} l1="Quick" l2="measure" />
            </GroupRow>
            <GroupLabel>Calculations</GroupLabel>
          </Group>
          <Group $w={91}>
            <GroupRow><RB off icon={RI.sens} l1="Sensitivity" chev2 /></GroupRow>
            <GroupLabel>Sensitivity</GroupLabel>
          </Group>
          <Group $w={74}>
            <GroupRow><RB icon={RI.publish} l1="Publish" /></GroupRow>
            <GroupLabel>Share</GroupLabel>
          </Group>
          <Group $w={74}>
            <GroupRow><RB icon={RI.copilot} l1="Copilot" /></GroupRow>
            <GroupLabel>Copilot</GroupLabel>
          </Group>
        </RibbonBody>
        <Collapse><Svg w={12} h={8}><path d="M1 7l5-5 5 5" stroke="#252423" strokeWidth="1.8" /></Svg></Collapse>
      </Ribbon>

      <Main>
        <Rail>
          <RailBtn $on><Svg s={20}><path d="M1 1v17h18" stroke="#222" strokeWidth="1.4" /><rect x="4" y="7" width="3" height="8" stroke="#222" /><rect x="9" y="9" width="3" height="6" stroke="#222" /><rect x="14" y="3" width="3" height="12" stroke="#222" /></Svg></RailBtn>
          <RailBtn><Svg s={22}><GridTable x={1} y={2} w={20} h={18} c="#8a8886" cols={3} rows={3} sw={1.2} head="#8a8886" /></Svg></RailBtn>
          <RailBtn><Svg s={24}><g stroke="#8a8886" strokeWidth="1.3" fill="#f3f2f1"><rect x="1" y="8" width="9" height="10" /><rect x="14" y="1" width="9" height="9" /><rect x="14" y="13" width="9" height="10" /><path d="M1 11h9M14 4h9M14 16h9M10 8h4M10 16h4" /></g></Svg></RailBtn>
          <RailBtn><Svg s={24}><path d="M6 13V2h9l5 5v11c0 2-1 3-2 4" stroke="#8a8886" strokeWidth="1.2" /><path d="M15 2v5h5" stroke="#8a8886" /><text x="0" y="22" fontSize="7.5" fontWeight="600" fill="#8a8886" fontFamily="Open Sans">DAX</text></Svg></RailBtn>
        </Rail>
        <Center>
          <WorkArea>
            <Canvas>
              <Page>
                <TableVisual>
                  <colgroup><col width="41" /><col width="95" /><col width="138" /><col width="104" /></colgroup>
                  <thead>
                    <tr><Th $pad={5}>Year</Th><Th $pad={7}>Total Revenue</Th><Th $pad={7}>PreviousYearRevenue</Th><Th $pad={7}>YoYGrowthRate</Th></tr>
                  </thead>
                  <tbody>
                    <tr><Td>2020</Td><Td>$6,404,934</Td><Td /><Td /></tr>
                    <tr><Td $alt $h={22}>2021</Td><Td $alt $h={22}>$9,324,204</Td><Td $alt $h={22}>$6,404,934</Td><Td $alt $h={22}>46%</Td></tr>
                    <tr><Td $h={21}>2022</Td><Td $h={21}>$9,185,449</Td><Td $h={21}>$9,324,204</Td><Td $h={21}>-1%</Td></tr>
                    <tr><Td $top $b $h={22}>Total</Td><Td $top $b $h={22}>$24,914,587</Td><Td $top $b $h={22}>$15,729,137</Td><Td $top $b $h={22}>58%</Td></tr>
                  </tbody>
                </TableVisual>
                <CardVisual>
                  <CardValue>22%</CardValue>
                  <CardLabel>AverageYoYGrowthRate</CardLabel>
                </CardVisual>
              </Page>
            </Canvas>
            <FiltersPane>
              <Dbl left />
              <FunnelWrap><Svg s={18}><path d="M1 8l13-6v13z" stroke="#333" strokeWidth="1.2" /></Svg></FunnelWrap>
              <FiltersText>Filters</FiltersText>
            </FiltersPane>
          </WorkArea>
          <TabsBar>
            <ViewSwitch>
              <ViewBtn $w={56}>
                <Svg s={26}><rect x="2" y="2" width="22" height="16" fill="#f3f2f1" stroke="#605e5c" strokeWidth="1.3" /><path d="M13 18v4M7 23h12" stroke="#605e5c" strokeWidth="1.3" /></Svg>
                <ActiveMark />
              </ViewBtn>
              <ViewBtn $w={50}>
                <Svg w={16} h={26}><rect x="1" y="1" width="14" height="24" rx="1" stroke="#605e5c" strokeWidth="1.4" /><rect x="7" y="20" width="2" height="2" fill="#2b88d8" /></Svg>
              </ViewBtn>
              <ViewBtn $w={26}><Svg w={10} h={26}><path d="M7 8L2 13l5 5z" fill="#c8c6c4" /></Svg></ViewBtn>
              <ViewBtn $w={26}><Svg w={10} h={26}><path d="M3 8l5 5-5 5z" fill="#c8c6c4" /></Svg></ViewBtn>
            </ViewSwitch>
            <PageTab $w={157}>Exec Dashboard</PageTab>
            <PageTab $w={82}>Map</PageTab>
            <PageTab $w={144}>Product Detail</PageTab>
            <PageTab $w={158}>Customer Detail</PageTab>
            <PageTab $w={160}>
              <Svg s={18}><path d="M1 11c4-5 11-6 16-1-4 6-11 6-16 1z" stroke="#777" /><circle cx="9" cy="10" r="2.5" stroke="#777" /><path d="M3 3l12 13" stroke="#777" /></Svg>
              Category Tooltip
            </PageTab>
            <PageTab $w={161} $on>YoY Growth rate<TabClose>x</TabClose></PageTab>
            <AddTab><Svg s={16}><path d="M8 1.5v13M1.5 8h13" stroke="#fff" strokeWidth="3" /></Svg></AddTab>
          </TabsBar>
        </Center>
        <VizPane>
          <PaneHead $left={10} $right={7}><PaneTitle>Visualizations</PaneTitle><Dbl /></PaneHead>
          <BuildLabel>Build visual</BuildLabel>
          <ToggleRow>
            <Selected>
              <Svg s={32}><path d="M3 2h24" stroke="#333" strokeWidth="1.2" /><rect x="4" y="7" width="26" height="9" fill={T} stroke="#333" strokeDasharray="2 1" /><rect x="4" y="20" width="26" height="9" fill={T} stroke="#333" strokeDasharray="2 1" /></Svg>
            </Selected>
            <Svg s={32}><path d="M3 30V2h13l9 8v8M16 2v8h9M3 30h9" stroke="#333" strokeWidth="1.2" /><path d="M31 14L18 25" stroke="#333" strokeWidth="1.3" /><path d="M16 24c3 0 4 2 3 4-2 3-5 3-8 2 2-1 3-5 5-6z" stroke="#333" strokeWidth="1.2" /></Svg>
          </ToggleRow>
          <NotchLine>
            <Notch />
            <NotchStroke width="226" height="15" viewBox="0 0 226 15"><path d="M20 14.5L30 5l10 9.5" fill="none" stroke="#8a8886" /></NotchStroke>
          </NotchLine>
          <VizGrid>
            {VIZ.map((v, i) => <VizCell key={i}><Svg s={24}>{v}</Svg></VizCell>)}
            <VizCell><Svg s={24}><rect x="3" y="8" width="3" height="3" fill="#333" /><rect x="11" y="8" width="3" height="3" fill="#333" /><rect x="18" y="8" width="3" height="3" fill="#1b4f8a" /></Svg></VizCell>
          </VizGrid>
          <Divider />
          <FieldLabel>Values</FieldLabel>
          <Well $h={34} $pad={13}>Add data fields here</Well>
          <DrillTitle>Drill through</DrillTitle>
          <SwitchRow $mt={11}>Cross-report<Toggle><Knob />Off</Toggle></SwitchRow>
          <SwitchRow $mt={14}>Keep all filters<Toggle $on>On<Knob $on /></Toggle></SwitchRow>
          <Well $h={32} $pad={10} $mt={13}>Add drill-through fields here</Well>
        </VizPane>
        <DataPane>
          <PaneHead $left={10} $right={6}><PaneTitle>Data</PaneTitle><Dbl /></PaneHead>
          <Search2>
            <Svg s={18}><circle cx="7.5" cy="7.5" r="6" stroke="#484644" strokeWidth="1.2" /><path d="M12 12l5 5" stroke="#484644" strokeWidth="1.2" /></Svg>
            Search
          </Search2>
          <FieldList>
            {fields.map(([k, n]) => (
              <FieldRow key={n}>
                <Svg w={8} h={14}><path d="M1 1l6 6-6 6" stroke="#605e5c" /></Svg>
                <FieldIcon>{k === 't' ? <TableIcon /> : k === 'm' ? <MeasureIcon /> : <CalcTableIcon />}</FieldIcon>
                <FieldName>{n}</FieldName>
              </FieldRow>
            ))}
          </FieldList>
        </DataPane>
      </Main>

      <StatusBar>
        <StatusText>Page 6 of 6</StatusText>
        <Zoomer>
          <StatusText $fs={18} $b>-</StatusText>
          <Slider><Thumb /><Tick /></Slider>
          <StatusText $fs={18} $b $mr={14}>+</StatusText>
          <StatusText $mr={24}>82%</StatusText>
          <Svg w={20} h={18}><rect x="1" y="1" width="18" height="16" stroke="#605e5c" strokeWidth="1.3" /><path d="M4 7V4h3M13 4h3v3M4 11v3h3M16 11v3h-3" stroke="#605e5c" /></Svg>
          <StatusText $ml={17} $mr={3}>Update available (click to download)</StatusText>
        </Zoomer>
      </StatusBar>
    </Shell>
  );
}
